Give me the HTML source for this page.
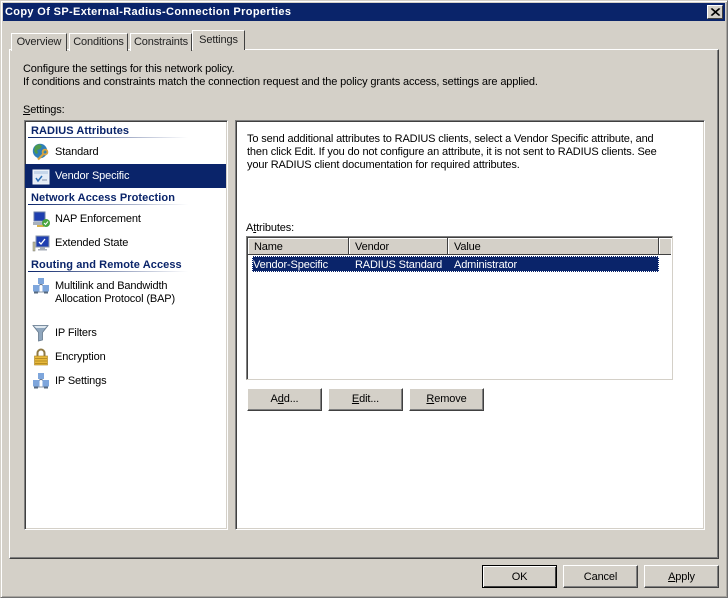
<!DOCTYPE html>
<html><head><meta charset="utf-8"><style>
html,body{margin:0;padding:0}
body{width:728px;height:598px;position:relative;overflow:hidden;background:#d4d0c8;font:11px/13px "Liberation Sans",sans-serif;color:#000;letter-spacing:-.14px}
.a{position:absolute;box-sizing:border-box}
.t{position:absolute;white-space:nowrap}
.b{position:absolute;box-sizing:border-box;background:#d4d0c8;border:1px solid;border-color:#fff #404040 #404040 #fff;box-shadow:inset -1px -1px 0 #808080;text-align:center;line-height:20px;height:23px;width:75px}
.tab{position:absolute;box-sizing:border-box;background:#d4d0c8;border:1px solid;border-color:#fff #404040 transparent #fff;border-bottom:0;height:18px;top:32px;text-align:center;line-height:17px;color:#222}
.h{position:absolute;left:31px;font-weight:bold;color:#0a246a;white-space:nowrap;letter-spacing:.08px}
.l{position:absolute;left:28px;width:160px;height:1px;background:linear-gradient(90deg,#0a246a,#fff)}
.i{position:absolute;left:31px;width:20px;height:20px}
u{text-decoration:underline}
</style></head><body>
<div class="a" style="left:0;top:0;width:728px;height:598px;border:1px solid;border-color:#d4d0c8 #707070 #707070 #d4d0c8;box-shadow:inset 1px 1px 0 #fff,inset -1px -1px 0 #a8a5a0"></div>
<div class="a" style="left:3px;top:3px;width:722px;height:18px;background:#0a246a"></div>
<div class="t" style="left:5px;top:6px;color:#fff;font-weight:bold;letter-spacing:.35px">Copy Of SP-External-Radius-Connection Properties</div>
<div class="a" style="left:707px;top:5px;width:16px;height:14px;background:#d4d0c8;border:1px solid;border-color:#fff #404040 #404040 #fff"></div>
<svg class="a" style="left:707px;top:5px" width="16" height="14"><path d="M4 3.500L12 10.500M5 3.500L13 10.500M12 3.500L4 10.500M13 3.500L5 10.500" stroke="#000" stroke-width="1"/></svg>

<div class="a" style="left:9px;top:49px;width:710px;height:510px;border:1px solid;border-color:#fff #404040 #404040 #fff;box-shadow:inset -1px -1px 0 #808080"></div>
<div class="tab" style="left:11px;width:56px;top:33px">Overview</div>
<div class="tab" style="left:69px;width:59px;top:33px">Conditions</div>
<div class="tab" style="left:130px;width:62px;top:33px">Constraints</div>
<div class="tab" style="left:192px;width:53px;top:30px;height:20px;line-height:18px;z-index:2">Settings</div>

<div class="t" style="left:23px;top:63px">Configure the settings for this network policy.</div>
<div class="t" style="left:23px;top:76px">If conditions and constraints match the connection request and the policy grants access, settings are applied.</div>
<div class="t" style="left:23px;top:104px"><u>S</u>ettings:</div>

<div class="a" style="left:24px;top:120px;width:204px;height:410px;background:#fff;border:1px solid;border-color:#808080 #fff #fff #808080;box-shadow:inset 1px 1px 0 #404040,inset -1px -1px 0 #d4d0c8"></div>
<div class="a" style="left:235px;top:120px;width:470px;height:410px;background:#fff;border:1px solid;border-color:#808080 #fff #fff #808080;box-shadow:inset 1px 1px 0 #404040,inset -1px -1px 0 #d4d0c8"></div>

<div class="h" style="top:125px">RADIUS Attributes</div><div class="l" style="top:137px"></div>
<div class="a" style="left:25px;top:164px;width:201px;height:24px;background:#0a246a"></div>
<div class="h" style="top:192px">Network Access Protection</div><div class="l" style="top:204px"></div>
<div class="h" style="top:259px">Routing and Remote Access</div><div class="l" style="top:271px"></div>

<div class="t" style="left:55px;top:146px">Standard</div>
<div class="t" style="left:55px;top:170px;color:#fff">Vendor Specific</div>
<div class="t" style="left:55px;top:213px">NAP Enforcement</div>
<div class="t" style="left:55px;top:237px">Extended State</div>
<div class="t" style="left:55px;top:280px">Multilink and Bandwidth</div>
<div class="t" style="left:55px;top:293px">Allocation Protocol (BAP)</div>
<div class="t" style="left:55px;top:327px">IP Filters</div>
<div class="t" style="left:55px;top:351px">Encryption</div>
<div class="t" style="left:55px;top:375px">IP Settings</div>

<svg class="i" style="top:142px" viewBox="0 0 20 20"><circle cx="9" cy="9" r="7.200" fill="#2f7fb8"/><path d="M4 4l4-2 3 2-2 3-3 1 1 3-2 1-2-3z" fill="#4f9a4a"/><path d="M11 9l2-1 1 1-2 2z" fill="#6aa64f"/><path d="M7 17.500l5-5" stroke="#d9a441" stroke-width="2.200"/><circle cx="14" cy="10" r="2.400" fill="none" stroke="#d9a441" stroke-width="1.800"/></svg>
<svg class="i" style="top:166px" viewBox="0 0 20 20"><rect x="2" y="4" width="16" height="14" fill="#e4ecf6" stroke="#f4f7fb"/><rect x="3" y="5" width="14" height="3" fill="#c5d6ea"/><path d="M5 12l2 3 4-5" fill="none" stroke="#2a6db5" stroke-width="1.500"/><path d="M11 14h5" stroke="#7f8fa8"/></svg>
<svg class="i" style="top:209px" viewBox="0 0 20 20"><rect x="3" y="3" width="11" height="9" fill="#1f3fb0" stroke="#6b7fa8"/><path d="M2 13h13v3H2z" fill="#a9b2bd"/><path d="M6 16h7v2H6z" fill="#d6b24a"/><circle cx="15" cy="14" r="4" fill="#4aa53f"/><path d="M13 14l1.500 1.500 2.500-3" stroke="#fff" fill="none"/></svg>
<svg class="i" style="top:233px" viewBox="0 0 20 20"><rect x="5" y="3" width="13" height="11" fill="#1f3fb0" stroke="#8a97ab"/><path d="M8 9l2 2 4-5" stroke="#fff" fill="none" stroke-width="1.300"/><path d="M9 14h5v2H9zM7 16h9v1.500H7z" fill="#a7aeb8"/><rect x="2" y="9" width="2" height="9" fill="#c9c59a" stroke="#777" stroke-width=".5"/></svg>
<svg class="i" style="top:276px" viewBox="0 0 20 20"><path d="M10 8L6 11M10 8l4 3" stroke="#55677f"/><rect x="7" y="2" width="6" height="6" fill="#7ea6dc"/><rect x="2" y="9" width="6.500" height="6.500" fill="#7ea6dc"/><rect x="11.500" y="9" width="6.500" height="6.500" fill="#7ea6dc"/><path d="M3 15.500h4v2H3zM13 15.500h4v2h-4z" fill="#56697f"/><path d="M7 16h6" stroke="#8a97a8"/></svg>
<svg class="i" style="top:323px" viewBox="0 0 20 20"><path d="M2 2.500h15l-5.500 7v7.500l-4 1V9.500z" fill="#8fa6bd" stroke="#64788c" stroke-width=".8"/><path d="M3 3h13l-2 2H5z" fill="#dfe8ef"/></svg>
<svg class="i" style="top:347px" viewBox="0 0 20 20"><path d="M6.500 9V6a3.500 3.500 0 0 1 7 0v3" fill="none" stroke="#8f7a45" stroke-width="2"/><rect x="3.500" y="9" width="13" height="9" fill="#e8b93c" stroke="#a67f1e" stroke-width=".6"/><path d="M4 11.500h12M4 14h12M4 16.500h12" stroke="#b98e22"/></svg>
<svg class="i" style="top:371px" viewBox="0 0 20 20"><path d="M10 8L6 11M10 8l4 3" stroke="#55677f"/><rect x="7" y="2" width="6" height="6" fill="#7ea6dc"/><rect x="2" y="9" width="6.500" height="6.500" fill="#7ea6dc"/><rect x="11.500" y="9" width="6.500" height="6.500" fill="#7ea6dc"/><path d="M3 15.500h4v2H3zM13 15.500h4v2h-4z" fill="#56697f"/><path d="M7 16h6" stroke="#8a97a8"/></svg>

<div class="t" style="left:247px;top:133px">To send additional attributes to RADIUS clients, select a Vendor Specific attribute, and</div>
<div class="t" style="left:247px;top:146px">then click Edit. If you do not configure an attribute, it is not sent to RADIUS clients. See</div>
<div class="t" style="left:247px;top:159px">your RADIUS client documentation for required attributes.</div>
<div class="t" style="left:246px;top:222px">A<u>t</u>tributes:</div>

<div class="a" style="left:246px;top:236px;width:427px;height:144px;background:#fff;border:1px solid;border-color:#808080 #d4d0c8 #d4d0c8 #808080;box-shadow:inset 1px 1px 0 #404040"></div>
<div class="a" style="left:248px;top:238px;width:101px;height:17px;background:#d4d0c8;border-right:1px solid #404040;border-bottom:1px solid #404040;box-shadow:inset 1px 1px 0 #fff"></div>
<div class="a" style="left:349px;top:238px;width:99px;height:17px;background:#d4d0c8;border-right:1px solid #404040;border-bottom:1px solid #404040;box-shadow:inset 1px 1px 0 #fff"></div>
<div class="a" style="left:448px;top:238px;width:211px;height:17px;background:#d4d0c8;border-right:1px solid #404040;border-bottom:1px solid #404040;box-shadow:inset 1px 1px 0 #fff"></div>
<div class="a" style="left:659px;top:238px;width:12px;height:17px;background:#d4d0c8;border-bottom:1px solid #404040;box-shadow:inset 1px 1px 0 #fff"></div>
<div class="t" style="left:254px;top:241px">Name</div>
<div class="t" style="left:355px;top:241px">Vendor</div>
<div class="t" style="left:454px;top:241px">Value</div>
<div class="a" style="left:252px;top:256px;width:407px;height:16px;background:#0a246a;outline:1px dotted #fff;outline-offset:-1px"></div>
<div class="t" style="left:253px;top:259px;color:#fff">Vendor-Specific</div>
<div class="t" style="left:355px;top:259px;color:#fff">RADIUS Standard</div>
<div class="t" style="left:454px;top:259px;color:#fff">Administrator</div>

<div class="b" style="left:247px;top:388px"><span>A<u>d</u>d...</span></div>
<div class="b" style="left:328px;top:388px"><span><u>E</u>dit...</span></div>
<div class="b" style="left:409px;top:388px"><span><u>R</u>emove</span></div>

<div class="b" style="left:482px;top:565px;line-height:22px;border:1px solid #000;box-shadow:inset 1px 1px 0 #fff,inset -1px -1px 0 #404040">OK</div>
<div class="b" style="left:563px;top:565px;line-height:22px">Cancel</div>
<div class="b" style="left:644px;top:565px;line-height:22px"><u>A</u>pply</div>
</body></html>
